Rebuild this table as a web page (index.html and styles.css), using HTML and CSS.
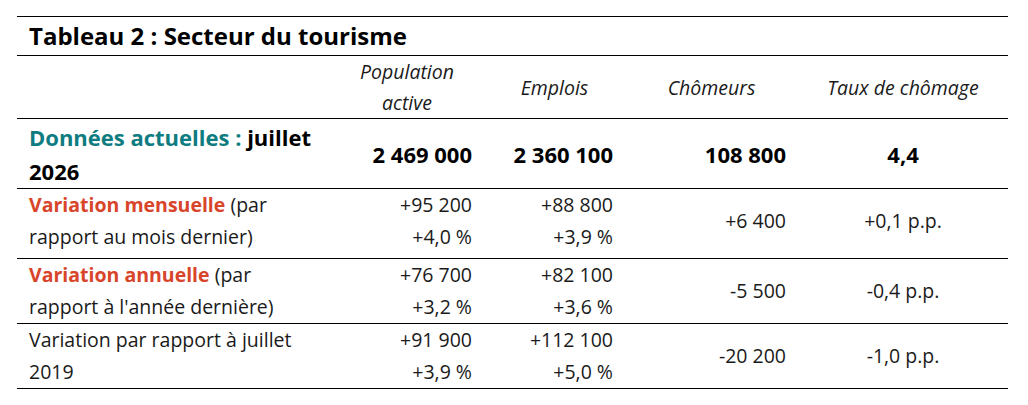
FILE: index.html
```html
<!DOCTYPE html>
<html lang="fr">
<head>
<meta charset="utf-8">
<title>Tableau 2 : Secteur du tourisme</title>
<link rel="stylesheet" href="styles.css">
</head>
<body>
<table class="stats">
  <colgroup>
    <col class="c-label">
    <col class="c-pop">
    <col class="c-emp">
    <col class="c-cho">
    <col class="c-taux">
  </colgroup>
  <thead>
    <tr class="row-title">
      <th colspan="5" class="title">Tableau 2 : Secteur du tourisme</th>
    </tr>
    <tr class="row-head">
      <th></th>
      <th class="colhead">Population<br>active</th>
      <th class="colhead">Emplois</th>
      <th class="colhead">Chômeurs</th>
      <th class="colhead">Taux de chômage</th>
    </tr>
  </thead>
  <tbody>
    <tr class="row-current">
      <td class="label"><span class="teal">Données actuelles :</span> juillet 2026</td>
      <td class="num">2 469 000</td>
      <td class="num">2 360 100</td>
      <td class="num">108 800</td>
      <td class="center">4,4</td>
    </tr>
    <tr class="row-var row-month">
      <td class="label"><span class="orange">Variation mensuelle</span> (par rapport au mois dernier)</td>
      <td class="num">+95 200<br>+4,0 %</td>
      <td class="num">+88 800<br>+3,9 %</td>
      <td class="num">+6 400</td>
      <td class="center">+0,1 p.p.</td>
    </tr>
    <tr class="row-var">
      <td class="label"><span class="orange">Variation annuelle</span> (par rapport à l'année dernière)</td>
      <td class="num">+76 700<br>+3,2 %</td>
      <td class="num">+82 100<br>+3,6 %</td>
      <td class="num">-5 500</td>
      <td class="center">-0,4 p.p.</td>
    </tr>
    <tr class="row-var row-last">
      <td class="label">Variation par rapport à juillet 2019</td>
      <td class="num">+91 900<br>+3,9 %</td>
      <td class="num">+112 100<br>+5,0 %</td>
      <td class="num">-20 200</td>
      <td class="center">-1,0 p.p.</td>
    </tr>
  </tbody>
</table>
</body>
</html>
```

FILE: styles.css
```css
html, body {
  margin: 0;
  padding: 0;
  background: #ffffff;
}

body {
  padding: 16px 0 0 17px;
  font-family: "Open Sans", "Noto Sans", "DejaVu Sans", sans-serif;
  color: #1a1a1a;
}

.stats {
  border-collapse: collapse;
  table-layout: fixed;
  width: 991px;
  border-bottom: 1px solid #000;
}

.c-label { width: 313px; }
.c-pop { width: 154px; }
.c-emp { width: 141px; }
.c-cho { width: 173px; }
.c-taux { width: 210px; }

.stats tr {
  border-top: 1px solid #000;
}

.stats th,
.stats td {
  padding: 0 12px;
  vertical-align: middle;
}

.title {
  text-align: left;
  padding-left: 11px;
  font-size: 24px;
  font-weight: 700;
  line-height: 38px;
  color: #000;
}

.row-head th {
  font-size: 19.5px;
  font-style: italic;
  font-weight: 400;
  line-height: 31px;
  color: #1a1a1a;
  text-align: center;
}

.label {
  padding-left: 11px;
  padding-right: 14px;
  text-align: left;
}

.row-current td {
  font-size: 22px;
  font-weight: 700;
  line-height: 34px;
  color: #000;
  padding-top: 1px;
}

.row-var td {
  font-size: 19.5px;
  line-height: 32px;
  color: #1a1a1a;
}

.row-month td {
  padding-bottom: 5px;
}

.num {
  text-align: right;
}

.center {
  text-align: center;
}

.teal {
  color: #0e7c80;
}

.orange {
  color: #d8452a;
  font-weight: 700;
}
```
